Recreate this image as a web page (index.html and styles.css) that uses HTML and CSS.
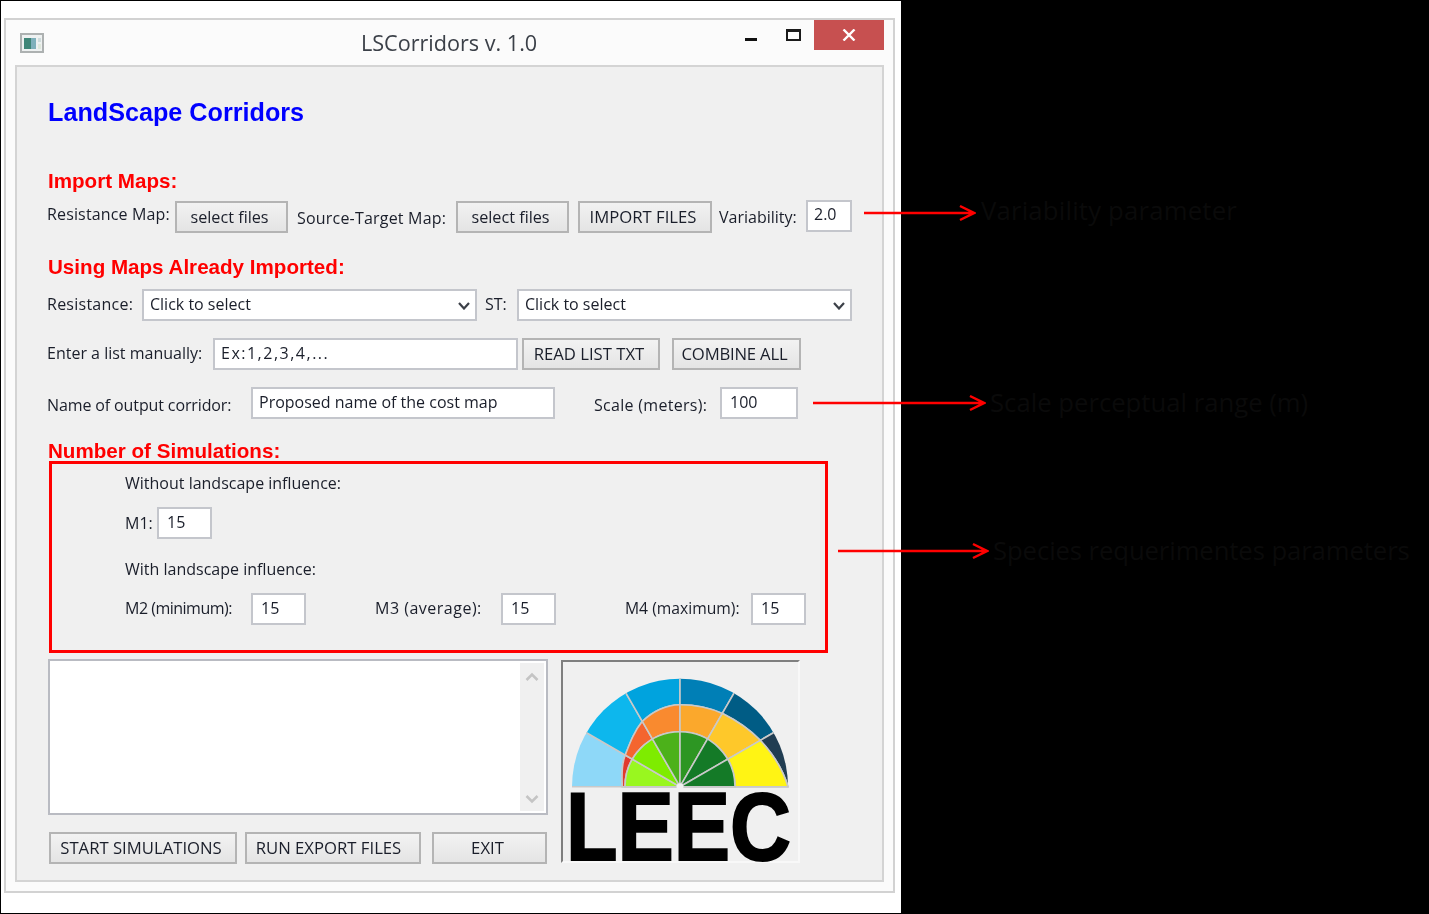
FILE: index.html
```html
<!DOCTYPE html>
<html lang="en">
<head>
<meta charset="utf-8">
<title>LSCorridors v. 1.0</title>
<link rel="stylesheet" href="styles.css">
</head>
<body>
<main class="sheet">
  <section class="window">
    <header class="titlebar">
      <svg class="app-icon" width="24" height="20" viewBox="0 0 24 20">
        <rect x="1" y="1" width="22" height="18" fill="#eef1f1" stroke="#adb1b1" stroke-width="2"/>
        <rect x="4" y="5" width="7" height="11" fill="#3f8678"/>
        <rect x="11" y="5" width="5" height="11" fill="#7fb0bb"/>
        <rect x="18" y="5" width="3" height="4" fill="#cfdcdc"/>
        <rect x="18" y="11" width="3" height="5" fill="#dfe8dc"/>
      </svg>
      <h1 class="title">LSCorridors v. 1.0</h1>
      <div class="controls">
        <span class="min"></span>
        <span class="max"></span>
        <span class="close"><svg width="14" height="12" viewBox="0 0 14 12"><path d="M1.5 .5 12.5 11.5M12.5 .5 1.5 11.5" stroke="#fff" stroke-width="2.4" fill="none"/></svg></span>
      </div>
    </header>
    <div class="panel">
      <h2 class="brand">LandScape Corridors</h2>

      <h3 class="section sec-import">Import Maps:</h3>
      <div class="row row-import">
        <span class="label raised w-res-map">Resistance Map:</span>
        <button class="btn w-select">select files</button>
        <span class="label w-source">Source-Target Map:</span>
        <button class="btn w-select">select files</button>
        <button class="btn caps w-import">IMPORT FILES</button>
        <span class="label w-var">Variability:</span>
        <div class="field field-up w-var-input">2.0</div>
      </div>

      <h3 class="section sec-using">Using Maps Already Imported:</h3>
      <div class="row row-combo">
        <span class="label nudge w-resistance">Resistance:</span>
        <div class="field combo">Click to select
          <svg class="chev" width="12" height="8" viewBox="0 0 12 8"><path d="M1 1 6 6.5 11 1" fill="none" stroke="#3c4048" stroke-width="2.2"/></svg>
        </div>
        <span class="label nudge w-st">ST:</span>
        <div class="field combo">Click to select
          <svg class="chev" width="12" height="8" viewBox="0 0 12 8"><path d="M1 1 6 6.5 11 1" fill="none" stroke="#3c4048" stroke-width="2.2"/></svg>
        </div>
      </div>

      <div class="row row-list">
        <span class="label nudge w-enter">Enter a list manually:</span>
        <div class="field field-list">Ex:1,2,3,4,...</div>
        <button class="btn caps w-read">READ LIST TXT</button>
        <button class="btn caps w-combine">COMBINE ALL</button>
      </div>

      <div class="row row-name">
        <span class="label lowered w-name">Name of output corridor:</span>
        <div class="field field-name">Proposed name of the cost map</div>
        <span class="label lowered w-scale">Scale (meters):</span>
        <div class="field w-scale-input">100</div>
      </div>

      <h3 class="section sec-num">Number of Simulations:</h3>
      <div class="sim-box">
        <div class="sim-label sim-first">Without landscape influence:</div>
        <div class="row sim-row">
          <span class="label w-m1">M1:</span>
          <div class="field w-num">15</div>
        </div>
        <div class="sim-label sim-second">With landscape influence:</div>
        <div class="row sim-row">
          <span class="label nudge w-m2">M2 (minimum):</span>
          <div class="field w-num">15</div>
          <span class="label nudge w-m3">M3 (average):</span>
          <div class="field w-num">15</div>
          <span class="label nudge w-m4">M4 (maximum):</span>
          <div class="field w-num">15</div>
        </div>
      </div>

      <div class="bottom">
        <div class="bottom-left">
          <div class="log">
            <div class="scrollbar">
              <svg width="14" height="10" viewBox="0 0 14 10"><path d="M1.5 8 7 2.5 12.5 8" fill="none" stroke="#c4c4c4" stroke-width="2.6"/></svg>
              <svg width="14" height="10" viewBox="0 0 14 10"><path d="M1.5 2 7 7.5 12.5 2" fill="none" stroke="#c4c4c4" stroke-width="2.6"/></svg>
            </div>
          </div>
          <div class="actions">
            <button class="btn caps w-start">START SIMULATIONS</button>
            <button class="btn caps w-run">RUN EXPORT FILES</button>
            <button class="btn caps w-exit">EXIT</button>
          </div>
        </div>
        <div class="logo">
          <svg class="fan" width="235" height="130" viewBox="2 2 235 130">
            <defs>
              <path id="s1" d="M0 0-130 0-112.6-65Z"/>
              <path id="s2" d="M0 0-112.6-65-65-112.6Z"/>
              <path id="s3" d="M0 0-65-112.6 0-130Z"/>
              <path id="s4" d="M0 0 0-130 65-112.6Z"/>
              <path id="s5" d="M0 0 65-112.6 112.6-65Z"/>
              <path id="s6" d="M0 0 112.6-65 130 0Z"/>
              <path id="mid" d="M-57.7 0C-58-11-59-21-55-31C-50-44-46-55-38-65C-28-75-14-82 0-82C15-82 30-79 43-73C57-66 70-57 80-46.7C92-34 103-17 108 0Z"/>
              <clipPath id="c-outer"><circle r="108"/></clipPath>
              <clipPath id="c-mid"><use href="#mid"/></clipPath>
              <clipPath id="c-in"><circle r="55"/></clipPath>
            </defs>
            <g transform="translate(119 126.7)" stroke="#c9c9c9" stroke-width="1.6">
              <g clip-path="url(#c-outer)">
                <use href="#s1" fill="#8ed8f8"/><use href="#s2" fill="#0db7ed"/><use href="#s3" fill="#00a3de"/>
                <use href="#s4" fill="#007fb6"/><use href="#s5" fill="#005c85"/><use href="#s6" fill="#203d52"/>
              </g>
              <use href="#mid" fill="none"/>
              <g clip-path="url(#c-mid)">
                <use href="#s1" fill="#e13a2c"/><use href="#s2" fill="#f4652f"/><use href="#s3" fill="#f98a2f"/>
                <use href="#s4" fill="#fba82c"/><use href="#s5" fill="#fec82a"/><use href="#s6" fill="#fff414"/>
              </g>
              <use href="#mid" fill="none"/>
              <path d="M-55 0A55 55 0 0 1 55 0Z" fill="#f0f0f0"/>
              <g clip-path="url(#c-in)">
                <use href="#s1" fill="#99f71f"/><use href="#s2" fill="#7eec00"/><use href="#s3" fill="#4cb11a"/>
                <use href="#s4" fill="#2d9623"/><use href="#s5" fill="#147a27"/><use href="#s6" fill="#147a27"/>
              </g>
              <path d="M-55 0A55 55 0 0 1 55 0" fill="none"/>
              <circle r="3.5" fill="#f0f0f0" stroke="none"/>
            </g>
          </svg>
          <div class="leec">LEEC</div>
        </div>
      </div>
    </div>
  </section>
</main>

<aside class="note note-var">
  <svg width="112" height="18" viewBox="0 0 112 18"><path d="M0 9H110M96 2 110 9 96 16" fill="none" stroke="#f00" stroke-width="2.5"/></svg>
  <span class="note-text var-text">Variability parameter</span>
</aside>
<aside class="note note-scale">
  <svg width="173" height="18" viewBox="0 0 173 18"><path d="M0 9H171M157 2 171 9 157 16" fill="none" stroke="#f00" stroke-width="2.5"/></svg>
  <span class="note-text">Scale perceptual range (m)</span>
</aside>
<aside class="note note-species">
  <svg width="151" height="18" viewBox="0 0 151 18"><path d="M0 9H149M135 2 149 9 135 16" fill="none" stroke="#f00" stroke-width="2.5"/></svg>
  <span class="note-text species-text">Species requerimentes parameters</span>
</aside>
</body>
</html>
```

FILE: styles.css
```css
* { box-sizing: border-box; }

html, body {
  margin: 0;
  height: 914px;
  overflow: hidden;
  background: #000;
}

body {
  position: relative;
  padding: 1px 0 1px 1px;
  font-family: "Open Sans", sans-serif;
  color: #1a1e2a;
}

.sheet {
  width: 900px;
  height: 912px;
  background: #fff;
  padding: 17px 6px 0 3px;
}

.window {
  width: 891px;
  height: 875px;
  border: 2px solid #d2d2d2;
  background: #fbfbfb;
  padding: 0 9px 0 9px;
  filter: blur(0.35px);
}

.titlebar {
  position: relative;
  height: 45px;
  display: flex;
  align-items: flex-start;
}

.app-icon { margin: 13px 0 0 5px; }

.title {
  margin: 7px 0 0 317px;
  font-size: 21.6px;
  line-height: 32px;
  font-weight: 400;
  color: #3b4048;
  white-space: nowrap;
}

.controls {
  margin-left: auto;
  display: flex;
  align-items: flex-start;
}

.min {
  width: 12px;
  height: 3px;
  margin: 18px 29px 0 0;
  background: #111;
}

.max {
  width: 15px;
  height: 12px;
  margin-top: 9px;
  margin-right: 13px;
  border: 2px solid #1a1a1a;
  border-top-width: 3px;
}

.close {
  width: 70px;
  height: 30px;
  background: #c75050;
  display: flex;
  align-items: center;
  justify-content: center;
}

.panel {
  width: 869px;
  height: 817px;
  border: 2px solid #d4d4d4;
  background: #f0f0f0;
  padding: 27px 0 0 30px;
}

.brand {
  margin: 0 0 0 1px;
  height: 36px;
  font: 700 25.2px/36px "Liberation Sans", sans-serif;
  color: #0000ff;
}

.section {
  margin: 0 0 0 1px;
  font: 700 20.6px/28px "Liberation Sans", sans-serif;
  color: #f00;
  white-space: nowrap;
}

.sec-import { margin-top: 37px; height: 28px; }
.sec-using { margin-top: 20px; height: 28px; }
.sec-num { margin-top: 18px; height: 24px; line-height: 28px; }

.row {
  display: flex;
  align-items: center;
  height: 32px;
}

.row-import { margin-top: 5px; height: 33px; }
.row-combo { margin-top: 8px; }
.row-list { margin-top: 17px; }
.row-name { margin-top: 17px; }

.label {
  font-size: 16px;
  line-height: 20px;
  white-space: nowrap;
  flex: none;
}

.raised { padding-bottom: 6px; }
.lowered { padding-top: 3px; }
.nudge { padding-bottom: 2px; }

.btn {
  flex: none;
  height: 32px;
  padding: 0 4px 0 0;
  border: 2px solid #b4b4b4;
  background: linear-gradient(#f2f2f2, #e4e4e4);
  font: 16.2px/20px "Open Sans", sans-serif;
  color: #1a1e2a;
  white-space: nowrap;
}

.caps { font-size: 16.7px; }

.field {
  flex: none;
  position: relative;
  height: 32px;
  border: 2px solid #c4c6cc;
  background: #fff;
  padding: 0 6px;
  font-size: 16px;
  line-height: 27px;
  white-space: nowrap;
}

.field-up { line-height: 24px; margin-bottom: 2px; }

.w-res-map { width: 128px; letter-spacing: 0.15px; }
.w-select { width: 113px; margin-right: 9px; }
.w-source { width: 159px; letter-spacing: 0.2px; padding-top: 2px; }
.w-import { width: 134px; margin-right: 7px; }
.w-var { width: 87px; }
.w-var-input { width: 46px; }

.w-resistance { width: 95px; letter-spacing: 0.25px; }
.combo { width: 335px; line-height: 27px; }
.chev { position: absolute; right: 5px; top: 11px; }
.w-st { width: 32px; margin-left: 8px; }

.w-enter { width: 166px; }
.field-list { width: 305px; margin-right: 4px; letter-spacing: 1.5px; }
.w-read { width: 138px; margin-right: 12px; }
.w-combine { width: 129px; letter-spacing: -0.2px; }

.w-name { width: 204px; letter-spacing: -0.12px; }
.field-name { width: 304px; }
.w-scale { width: 126px; margin-left: 39px; letter-spacing: 0.3px; }
.w-scale-input { width: 78px; padding-left: 8px; }

.sim-box {
  width: 779px;
  height: 192px;
  margin-left: 2px;
  border: 3px solid #f00;
  padding: 7px 0 0 73px;
}

.sim-label {
  font-size: 16px;
  line-height: 24px;
  height: 24px;
  white-space: nowrap;
}

.sim-second { margin-top: 18px; }
.sim-row { margin-top: 12px; }

.w-m1 { width: 32px; }
.w-num { width: 55px; padding-left: 8px; }
.w-m2 { width: 126px; letter-spacing: -0.5px; }
.w-m3 { width: 126px; margin-left: 69px; letter-spacing: 0.5px; }
.w-m4 { width: 126px; margin-left: 69px; font-size: 15.7px; }

.bottom {
  display: flex;
  margin-top: 6px;
}

.bottom-left { width: 514px; }

.log {
  width: 500px;
  height: 156px;
  margin-left: 1px;
  border: 2px solid #b9bbc2;
  background: #fff;
  padding: 2px 2px 2px 0;
  display: flex;
  justify-content: flex-end;
}

.scrollbar {
  width: 24px;
  background: #f0f0f0;
  display: flex;
  flex-direction: column;
  justify-content: space-between;
  align-items: center;
  padding: 9px 0 7px;
}

.actions {
  display: flex;
  margin: 17px 0 0 2px;
}

.w-start { width: 188px; margin-right: 8px; }
.w-run { width: 176px; margin-right: 11px; padding-right: 9px; }
.w-exit { width: 115px; }

.logo {
  width: 239px;
  height: 203px;
  margin-top: 1px;
  border-style: solid;
  border-width: 2px;
  border-color: #7f7f7f #f8f8f8 #f8f8f8 #7f7f7f;
}

.fan { display: block; }

.leec {
  margin-left: 3px;
  height: 70px;
  font: 700 97px/70px "Liberation Sans", sans-serif;
  color: #000;
  -webkit-text-stroke: 2px #000;
  transform: scaleX(0.87);
  transform-origin: left center;
  white-space: nowrap;
}

.note {
  position: absolute;
  display: flex;
  align-items: center;
  height: 32px;
}

.note-var { left: 864px; top: 197px; }
.note-scale { left: 813px; top: 387px; }
.note-species { left: 838px; top: 535px; }

.note-text {
  margin-left: 4px;
  font: 25.7px/32px "Open Sans", sans-serif;
  color: #0a0a0a;
  white-space: nowrap;
}

.var-text { margin-left: 5px; padding-bottom: 5px; letter-spacing: 0.2px; }
.species-text { letter-spacing: -0.1px; }
```
